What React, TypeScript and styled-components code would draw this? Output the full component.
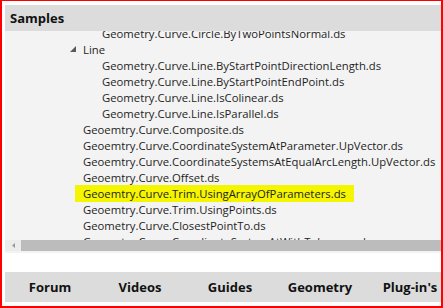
import styled, { createGlobalStyle } from 'styled-components';

const GlobalStyle = createGlobalStyle`
  html, body {
    margin: 0;
    padding: 0;
    background: #ffffff;
  }
  body {
    font-family: 'Open Sans', 'Noto Sans', sans-serif;
  }
`;

const Frame = styled.div`
  width: 443px;
  height: 308px;
  box-sizing: border-box;
  border: 2px solid #ff0000;
  border-top-width: 1px;
  padding: 4px 0 4px 3px;
  background: #ffffff;
  overflow: hidden;
  display: flex;
  flex-direction: column;
`;

const Panel = styled.div`
  height: 248px;
  background: #f3f3f3;
  display: flex;
  flex-direction: column;
  overflow: hidden;
`;

const PanelHeader = styled.div`
  height: 26px;
  flex: none;
  background: #dcdcdc;
  display: flex;
  align-items: center;
  padding-left: 5px;
  font-size: 13px;
  font-weight: 700;
  color: #111111;
  position: relative;
  z-index: 1;
`;

const TreeList = styled.div`
  height: 209px;
  flex: none;
  overflow: hidden;
`;

const TreeInner = styled.div`
  margin-top: -6px;
`;

const Row = styled.div<{ $indent: number }>`
  height: 16px;
  display: flex;
  align-items: center;
  padding-left: ${(p) => p.$indent}px;
  font-size: 11.3px;
  color: #1e1e1e;
  white-space: nowrap;
`;

const Highlight = styled.span`
  display: inline-flex;
  align-items: center;
  height: 17px;
  margin-left: -8px;
  padding: 0 8px;
  background: #f5f500;
`;

const Expander = styled.svg`
  width: 6px;
  height: 6px;
  margin-left: -13px;
  margin-right: 7px;
  fill: #595959;
`;

const ScrollBar = styled.div`
  height: 11px;
  flex: none;
  display: flex;
  align-items: stretch;
  background: #ececec;
`;

const ScrollArrow = styled.div`
  width: 16px;
  display: flex;
  align-items: center;
  justify-content: center;
  svg {
    width: 3px;
    height: 5px;
    fill: #9a9a9a;
  }
`;

const ScrollThumb = styled.div`
  flex: 1;
  background: #bcbcbc;
`;

const Spacer = styled.div`
  flex: 1;
`;

const Footer = styled.nav`
  height: 30px;
  flex: none;
  background: #dcdcdc;
  display: grid;
  grid-template-columns: repeat(5, 90px);
  align-items: center;
`;

const FooterLink = styled.span`
  text-align: center;
  font-size: 13px;
  font-weight: 700;
  color: #111111;
`;

type Item = { label: string; indent: number; expander?: boolean; highlight?: boolean };

const items: Item[] = [
  { label: 'Geometry.Curve.Circle.ByTwoPointsNormal.ds', indent: 97 },
  { label: 'Line', indent: 78, expander: true },
  { label: 'Geometry.Curve.Line.ByStartPointDirectionLength.ds', indent: 97 },
  { label: 'Geometry.Curve.Line.ByStartPointEndPoint.ds', indent: 97 },
  { label: 'Geometry.Curve.Line.IsColinear.ds', indent: 97 },
  { label: 'Geometry.Curve.Line.IsParallel.ds', indent: 97 },
  { label: 'Geoemtry.Curve.Composite.ds', indent: 78 },
  { label: 'Geoemtry.Curve.CoordinateSystemAtParameter.UpVector.ds', indent: 78 },
  { label: 'Geoemtry.Curve.CoordinateSystemsAtEqualArcLength.UpVector.ds', indent: 78 },
  { label: 'Geoemtry.Curve.Offset.ds', indent: 78 },
  { label: 'Geoemtry.Curve.Trim.UsingArrayOfParameters.ds', indent: 78, highlight: true },
  { label: 'Geoemtry.Curve.Trim.UsingPoints.ds', indent: 78 },
  { label: 'Geometry.Curve.ClosestPointTo.ds', indent: 78 },
  { label: 'Geoemtry.Curve.CoordinateSystemAtWithTolerance.ds', indent: 78 },
];

const links = ['Forum', 'Videos', 'Guides', 'Geometry', "Plug-in's"];

const App = () => {
  return (
    <>
      <GlobalStyle />
      <Frame>
        <Panel>
          <PanelHeader>Samples</PanelHeader>
          <TreeList>
            <TreeInner>
              {items.map((item) => (
                <Row key={item.label} $indent={item.indent}>
                  {item.expander && (
                    <Expander viewBox='0 0 6 6'>
                      <polygon points='6,0 6,6 0,6' />
                    </Expander>
                  )}
                  {item.highlight ? <Highlight>{item.label}</Highlight> : item.label}
                </Row>
              ))}
            </TreeInner>
          </TreeList>
          <ScrollBar>
            <ScrollArrow>
              <svg viewBox='0 0 3 5'>
                <polygon points='3,0 3,5 0,2.5' />
              </svg>
            </ScrollArrow>
            <ScrollThumb />
          </ScrollBar>
        </Panel>
        <Spacer />
        <Footer>
          {links.map((l) => (
            <FooterLink key={l}>{l}</FooterLink>
          ))}
        </Footer>
      </Frame>
    </>
  );
};

export default App;
